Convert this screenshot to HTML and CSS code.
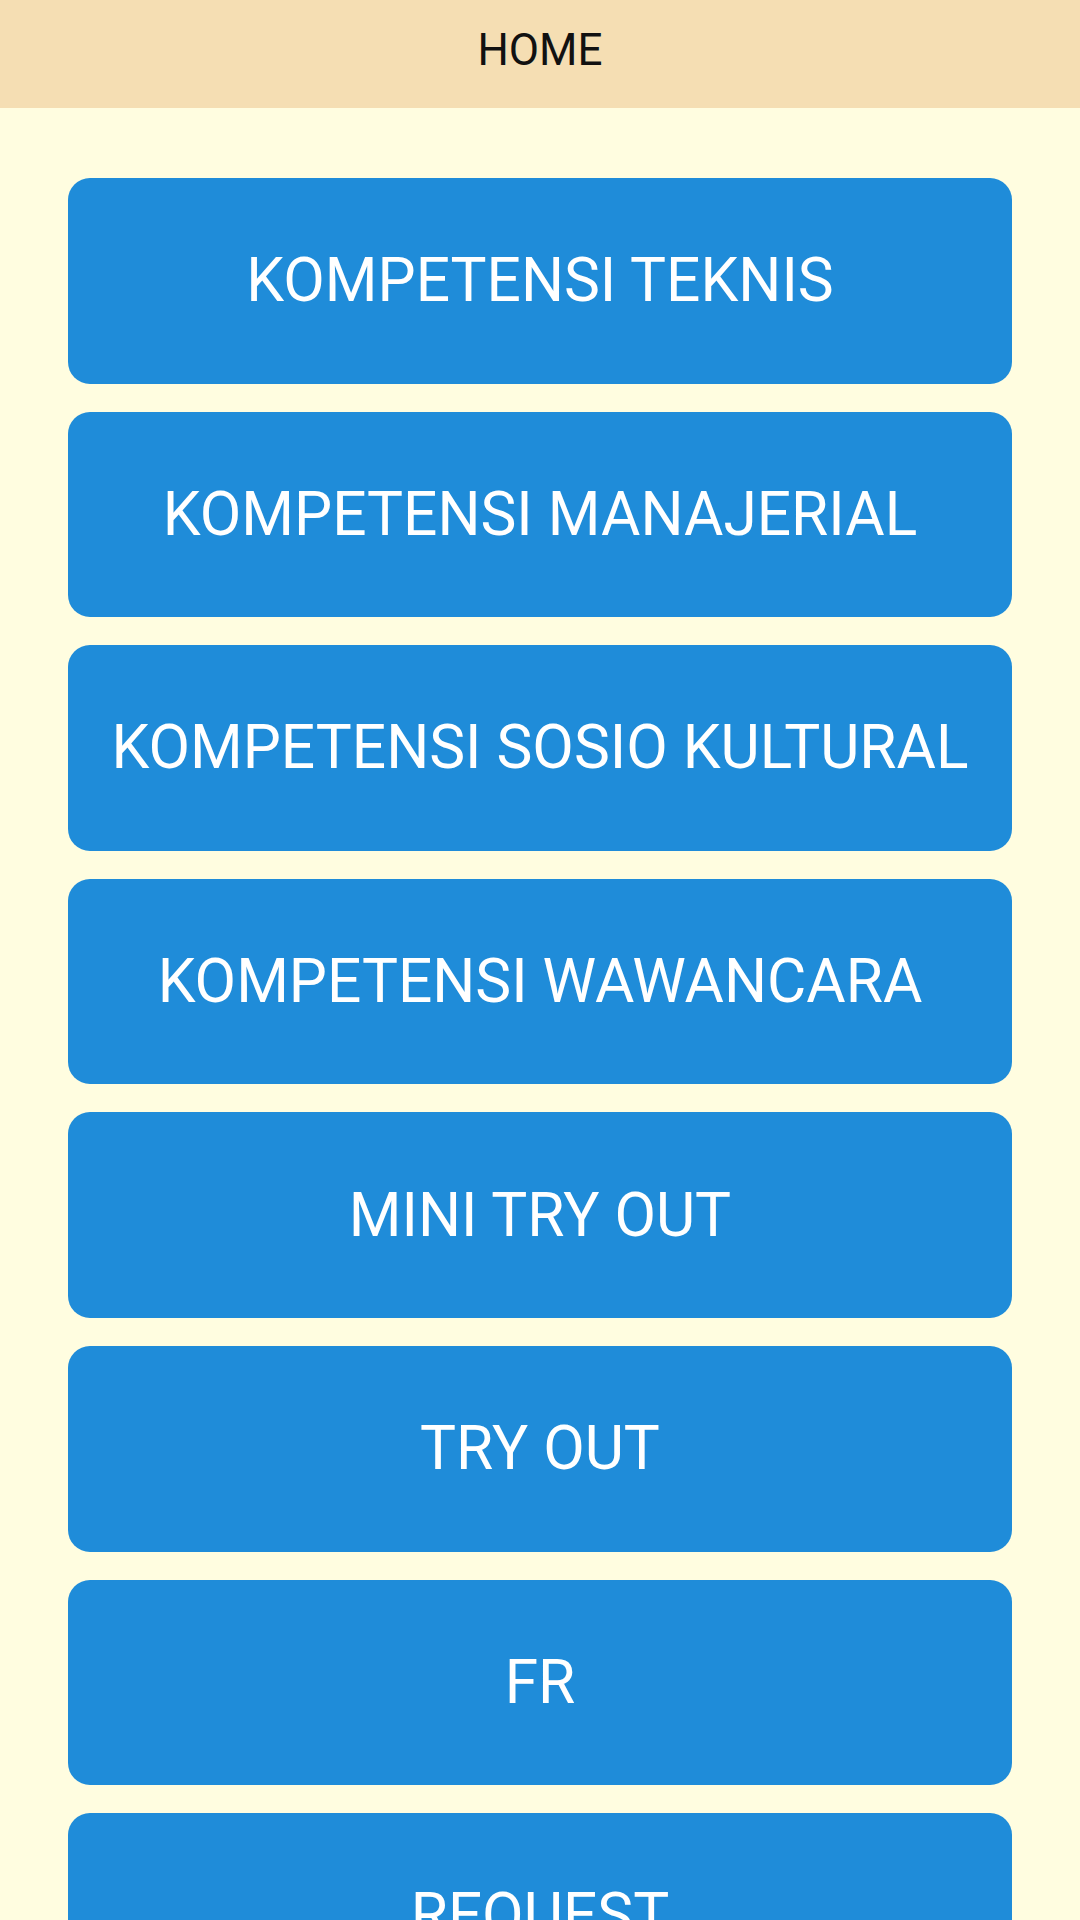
FILE: index.html
```html
<!DOCTYPE html>
<html lang="en">
<head>
    <meta charset="UTF-8">
    <meta name="viewport" content="width=device-width, initial-scale=1.0">
    <title>Home</title>
    <link rel="stylesheet" href="styles.css">
</head>
<body>
    <div class="topbar">HOME</div>
    <div class="menu">
        <button class="menu-btn">KOMPETENSI TEKNIS</button>
        <button class="menu-btn">KOMPETENSI MANAJERIAL</button>
        <button class="menu-btn">KOMPETENSI SOSIO KULTURAL</button>
        <button class="menu-btn">KOMPETENSI WAWANCARA</button>
        <button class="menu-btn">MINI TRY OUT</button>
        <button class="menu-btn">TRY OUT</button>
        <button class="menu-btn">FR</button>
        <button class="menu-btn">REQUEST</button>
    </div>
</body>
</html>
```

FILE: styles.css
```css
body {
    margin: 0;
    padding: 0;
    background-color: #fffde0;
    font-family: Roboto, "Liberation Sans", sans-serif;
    height: 1920px;
    overflow: hidden;
}

/* Title bar */
.topbar {
    height: 108px;
    background-color: #f5deb3;
    color: #111;
    font-size: 44px;
    line-height: 100px;
    text-align: center;
}

/* Button list */
.menu {
    display: flex;
    flex-direction: column;
    gap: 28px;
    padding: 70px 68px 0 68px;
}

.menu-btn {
    height: 205.6px;
    background-color: #1f8cd9;
    color: #fff;
    border: none;
    border-radius: 22px;
    font-family: Roboto, "Liberation Sans", sans-serif;
    font-size: 60.4px;
    padding: 0;
    flex-shrink: 0;
}
```
